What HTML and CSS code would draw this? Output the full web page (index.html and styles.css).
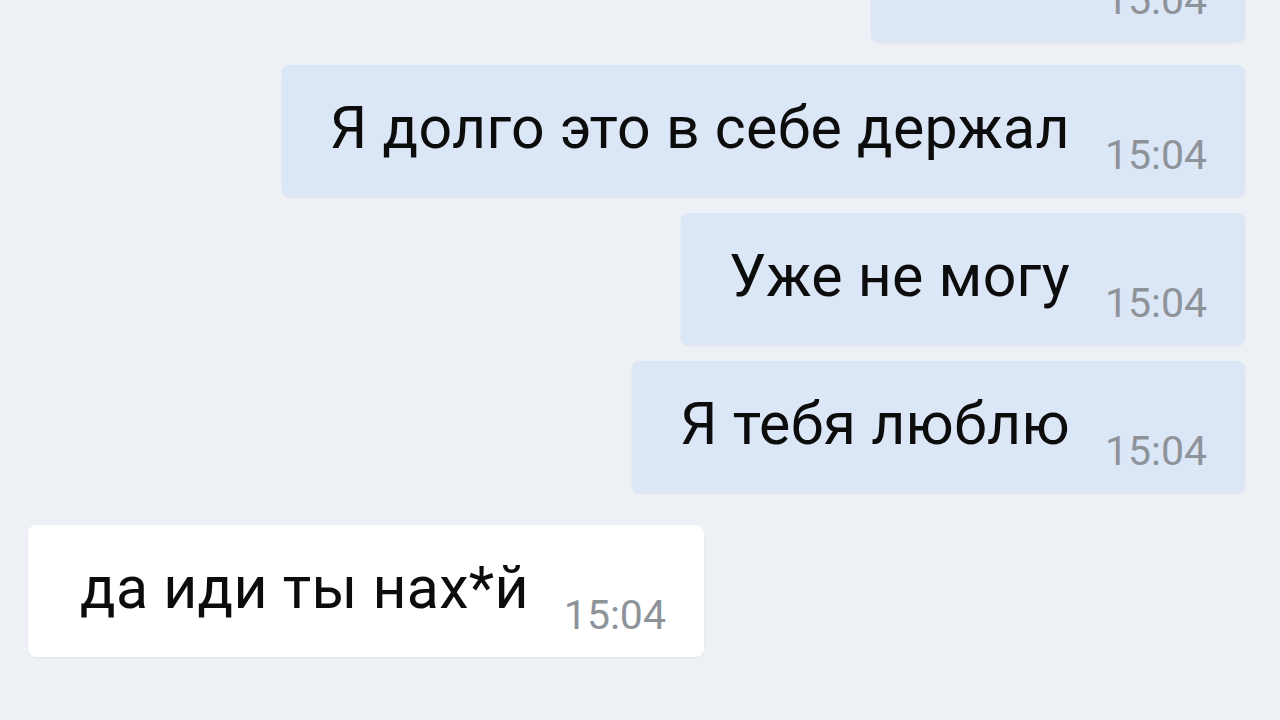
FILE: index.html
```html
<!DOCTYPE html>
<html lang="ru">
<head>
    <meta charset="UTF-8">
    <meta name="viewport" content="width=device-width, initial-scale=1.0">
    <title>Чат</title>
    <link rel="stylesheet" href="styles.css">
</head>
<body>
    <div class="chat">
        <div class="msg out first">
            <span class="text">Знаю</span>
            <span class="time">15:04</span>
        </div>
        <div class="msg out">
            <span class="text">Я долго это в себе держал</span>
            <span class="time">15:04</span>
        </div>
        <div class="msg out">
            <span class="text">Уже не могу</span>
            <span class="time">15:04</span>
        </div>
        <div class="msg out">
            <span class="text">Я тебя люблю</span>
            <span class="time">15:04</span>
        </div>
        <div class="msg in">
            <span class="text">да иди ты нах*й</span>
            <span class="time">15:04</span>
        </div>
    </div>
</body>
</html>
```

FILE: styles.css
```css
html, body {
    height: 100%;
}
body {
    margin: 0;
    background-color: #edf0f5;
    font-family: Roboto, "Noto Sans", Arial, sans-serif;
    overflow: hidden;
}
.chat {
    display: flex;
    flex-direction: column;
    padding: 0 35px 0 28px;
}
.msg {
    display: flex;
    align-items: flex-end;
    padding: 31px 38px 18px 48px;
    border-radius: 8px;
    margin-bottom: 16px;
    box-shadow: 0 1px 2px rgba(120, 135, 160, 0.12);
}
.msg.first {
    margin-top: -90px;
    margin-bottom: 23px;
}
.msg.out {
    align-self: flex-end;
    background-color: #dbe6f6;
}
.msg.in {
    align-self: flex-start;
    background-color: #ffffff;
    margin-top: 16px;
    padding-left: 52px;
}
.text {
    font-size: 59px;
    line-height: 64px;
    letter-spacing: 0.3px;
    color: #0c0c0c;
    margin-bottom: 19px;
    white-space: nowrap;
}
.time {
    font-size: 41px;
    line-height: 48px;
    color: #8e939a;
    margin-left: 35px;
    white-space: nowrap;
}
```
